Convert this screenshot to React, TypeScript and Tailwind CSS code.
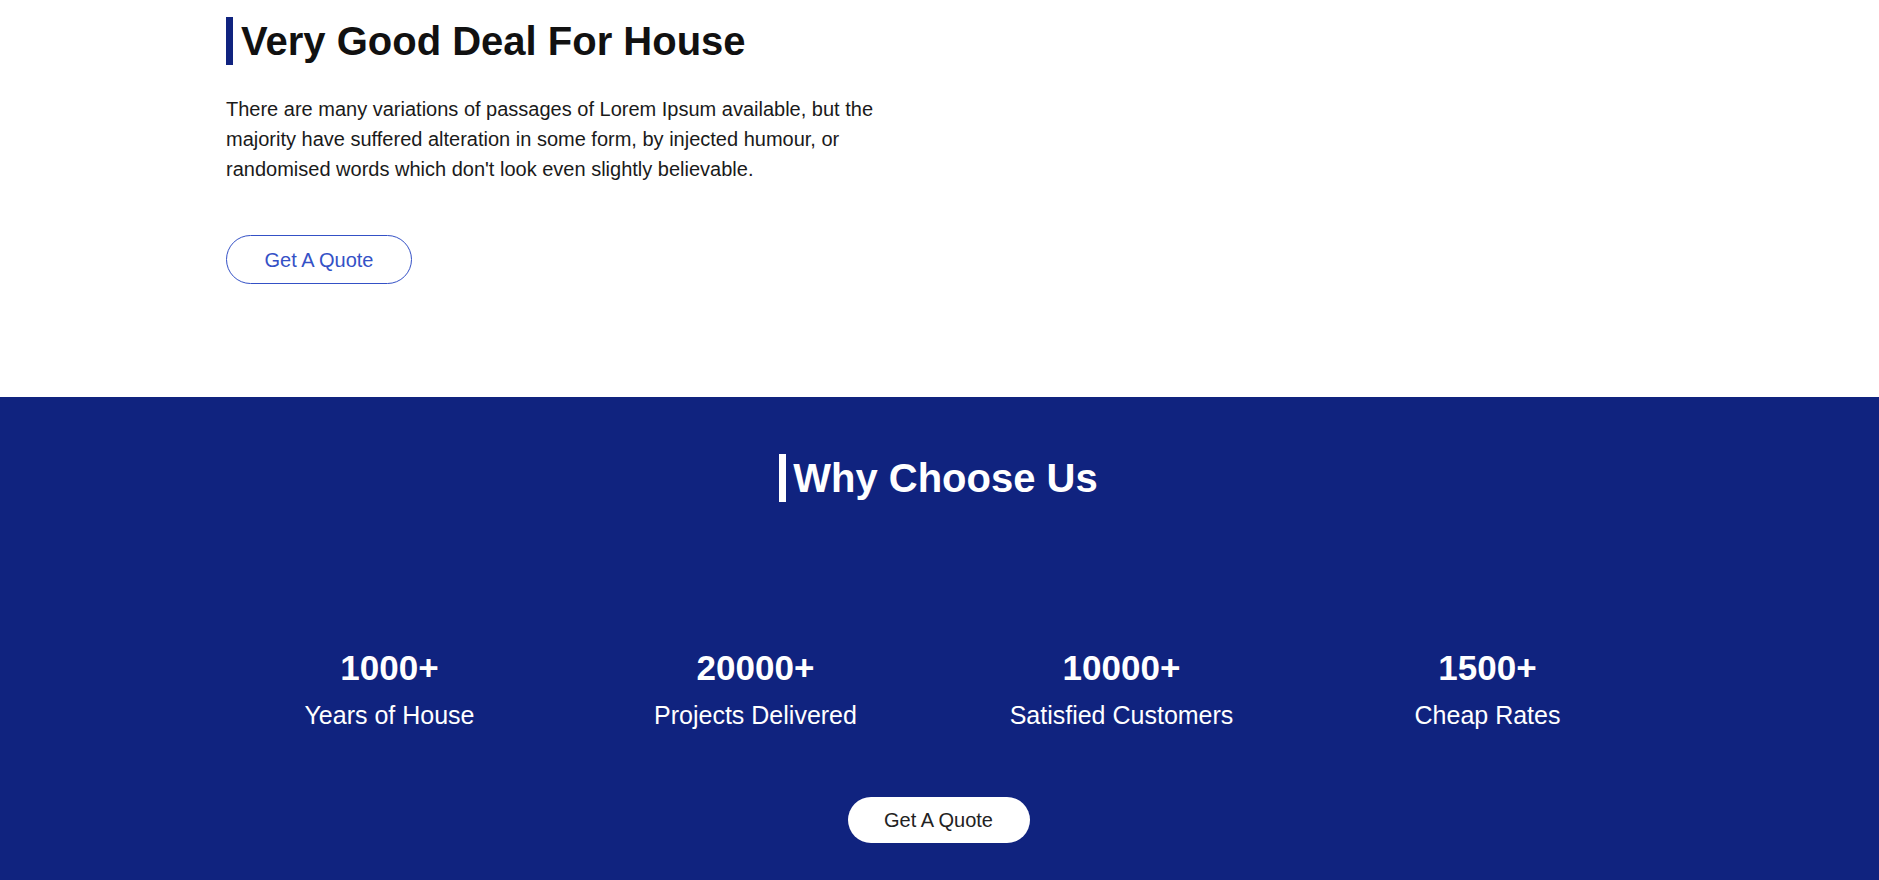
export default function App() {
  const stats = [
    { value: "1000+", label: "Years of House" },
    { value: "20000+", label: "Projects Delivered" },
    { value: "10000+", label: "Satisfied Customers" },
    { value: "1500+", label: "Cheap Rates" },
  ];

  return (
    <div className="min-h-screen bg-white font-['Liberation_Sans',Arial,sans-serif]">
      {/* deal section */}
      <section className="w-[1427px] mx-auto pt-[17px] pb-[113px]">
        <h2 className="border-l-[7px] border-[#10237f] pl-[8px] text-[40px] leading-[48px] font-bold text-[#111]">
          Very Good Deal For House
        </h2>
        <p className="mt-[29px] w-[660px] text-[20px] leading-[30px] text-[#1a1a1a]">
          There are many variations of passages of Lorem Ipsum available, but the majority have
          suffered alteration in some form, by injected humour, or randomised words which don't look
          even slightly believable.
        </p>
        <button className="mt-[51px] w-[186px] h-[49px] rounded-full border border-[#3451c6] text-[20px] text-[#3451c6] bg-white">
          Get A Quote
        </button>
      </section>

      {/* why choose us */}
      <section className="bg-[#10237f] min-h-[484px] pt-[57px] pb-[40px] pr-[2px] flex flex-col items-center">
        <h2 className="border-l-[7px] border-white pl-[7px] text-[40px] leading-[48px] font-bold text-white">
          Why Choose Us
        </h2>
        <div className="w-[1464px] mt-[145px] grid grid-cols-4">
          {stats.map((s) => (
            <div key={s.label} className="flex flex-col items-center text-white">
              <div className="text-[35px] leading-[42px] font-bold">{s.value}</div>
              <div className="mt-[11px] text-[25px] leading-[30px]">{s.label}</div>
            </div>
          ))}
        </div>
        <button className="mt-[67px] w-[182px] h-[46px] rounded-full bg-white text-[20px] text-[#222]">
          Get A Quote
        </button>
      </section>
    </div>
  );
}
